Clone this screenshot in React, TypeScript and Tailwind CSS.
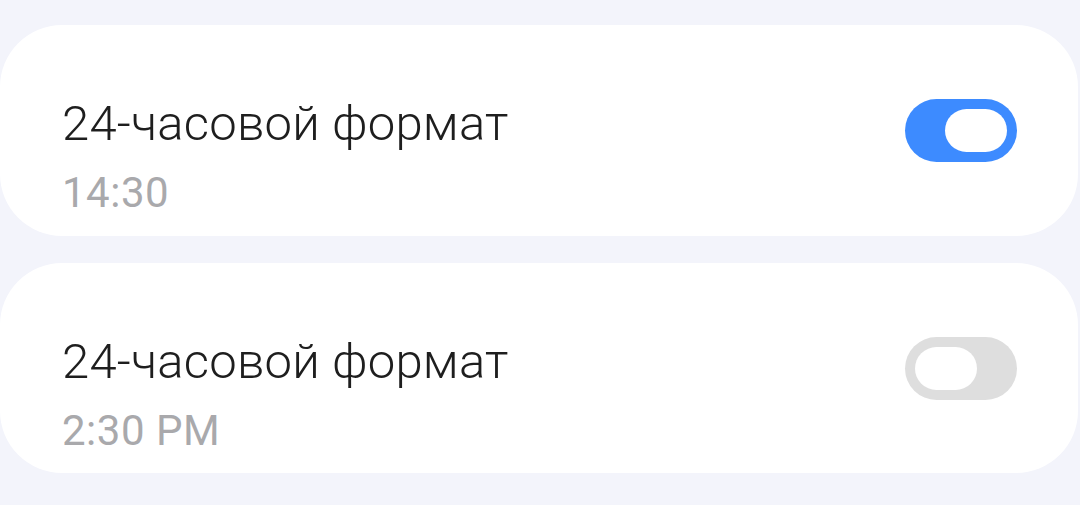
import React from "react";

function Toggle({ on }: { on: boolean }) {
  return (
    <div
      className={
        "flex h-[63px] w-[112px] shrink-0 items-center self-center rounded-full px-[10px] " +
        (on ? "justify-end bg-[#3d8bff]" : "justify-start bg-[#dedede]")
      }
    >
      <div className="h-[43px] w-[62px] rounded-full bg-white" />
    </div>
  );
}

function Row({ sub, on, h }: { sub: string; on: boolean; h: string }) {
  return (
    <div
      className={
        "mr-[2px] flex justify-between rounded-[62px] bg-white pl-[62px] pr-[61px] " +
        h
      }
    >
      <div className="flex flex-col self-start pt-[70px]">
        <div className="text-[49px] font-light leading-[57px] tracking-[0.2px] text-[#1e1e1e]">24-часовой формат</div>
        <div className="mt-[17px] text-[42px] leading-[48px] tracking-[0.5px] text-[#a9a9ac]">{sub}</div>
      </div>
      <Toggle on={on} />
    </div>
  );
}

export default function App() {
  return (
    <div
      className="flex h-[505px] w-[1080px] flex-col gap-[27px] bg-[#f3f4fb] pt-[25px]"
      style={{ fontFamily: "Roboto, 'Noto Sans', sans-serif" }}
    >
      <Row sub="14:30" on={true} h="h-[211px]" />
      <Row sub="2:30 PM" on={false} h="h-[210px]" />
    </div>
  );
}
